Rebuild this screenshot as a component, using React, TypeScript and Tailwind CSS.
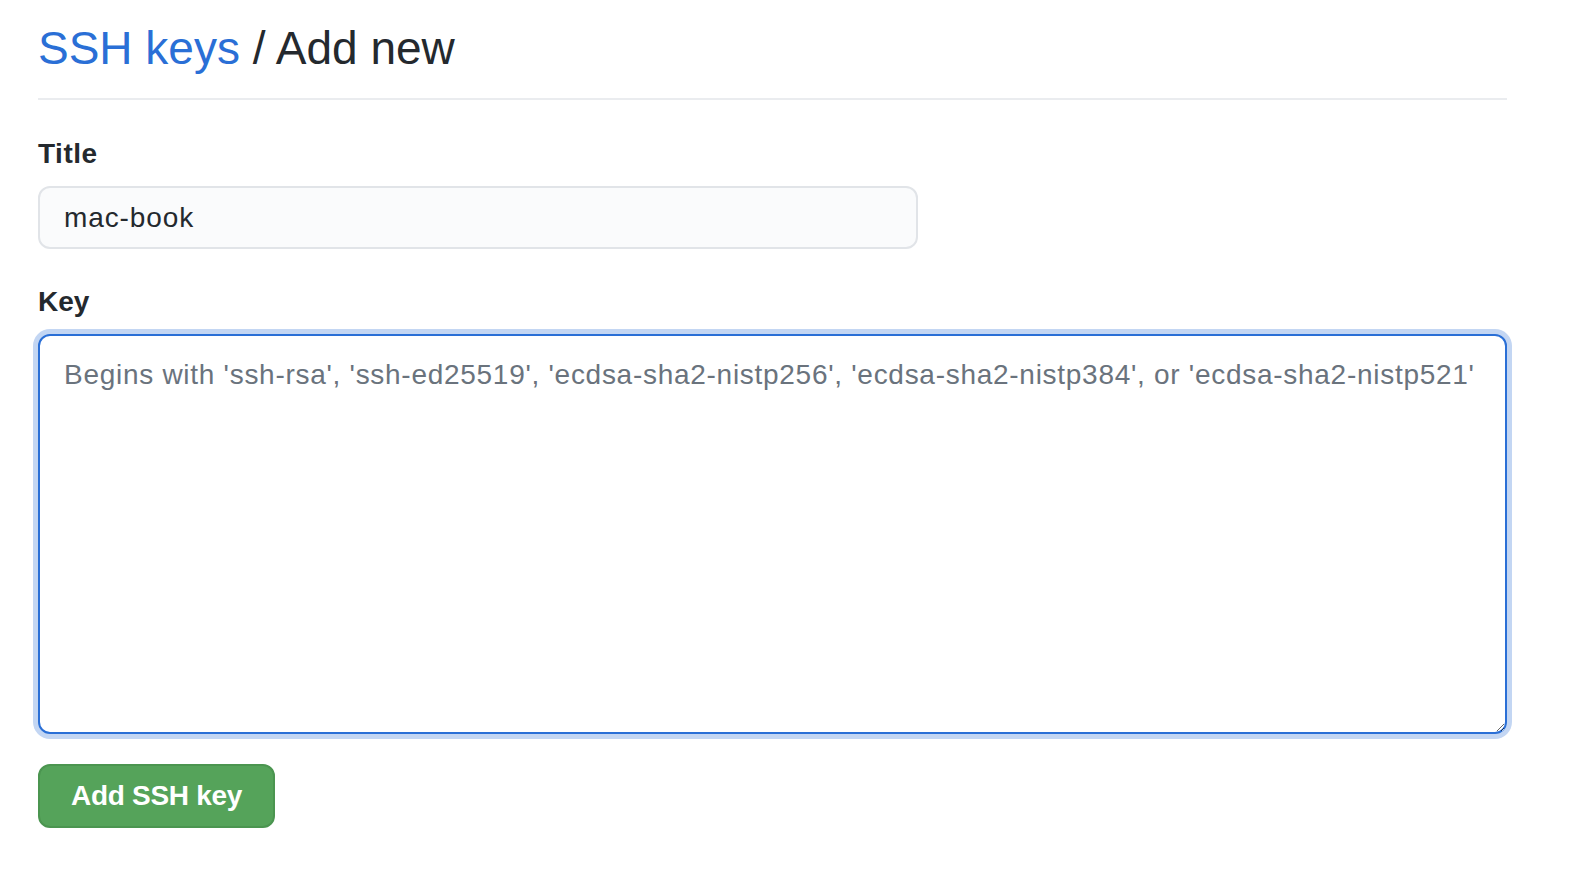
import React from 'react';

const PLACEHOLDER =
  "Begins with 'ssh-rsa', 'ssh-ed25519', 'ecdsa-sha2-nistp256', 'ecdsa-sha2-nistp384', or 'ecdsa-sha2-nistp521'";

export default function App() {
  return (
    <div className="min-h-screen bg-white text-[#24292e] font-['Liberation_Sans','Helvetica',sans-serif]">
      <div className="pl-[38px] pr-[79px] pt-[20px]">
        <h1 className="text-[46px] leading-[56px] font-normal pb-[22px] border-b-2 border-[#eaecef]">
          <a href="#" className="text-[#2a6fd6]">SSH keys</a> / Add new
        </h1>

        <form className="mt-[36px]" onSubmit={(e) => e.preventDefault()}>
          <label className="block text-[28px] leading-[36px] font-bold tracking-[0.5px] mb-[14px]">Title</label>
          <input
            defaultValue="mac-book"
            className="block w-[880px] h-[63px] px-[24px] text-[28px] tracking-[0.9px] rounded-[12px] border-2 border-[#e1e4e8] bg-[#fafbfc] outline-none"
          />

          <label className="block text-[28px] leading-[36px] font-bold mt-[35px] mb-[14px]">Key</label>
          <textarea
            placeholder={PLACEHOLDER}
            className="block w-full h-[400px] pl-[24px] pr-[8px] py-[19px] text-[28px] tracking-[0.72px] leading-[40px] rounded-[12px] border-2 border-[#2a6fd6] bg-white outline-none shadow-[0_0_0_5px_#c3d6f3] placeholder:text-[#6a737d] resize"
          />

          <button
            type="submit"
            className="mt-[30px] h-[64px] px-[31px] rounded-[12px] border-2 border-[#4b9550] bg-[#55a35a] text-white text-[28px] tracking-[-0.3px] font-bold"
          >
            Add SSH key
          </button>
        </form>
      </div>
    </div>
  );
}
